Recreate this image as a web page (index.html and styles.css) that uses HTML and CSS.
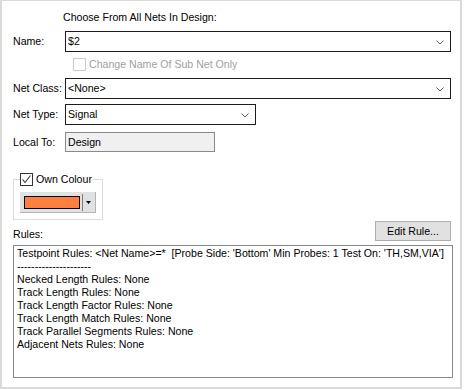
FILE: index.html
```html
<!DOCTYPE html>
<html>
<head>
<meta charset="utf-8">
<link rel="stylesheet" href="styles.css">
</head>
<body>
<div class="panel">
  <div class="caption">Choose From All Nets In Design:</div>

  <div class="row row-name">
    <span class="label">Name:</span>
    <div class="combo combo-wide">
      <span class="val">$2</span>
      <svg class="chev" width="8" height="5" viewBox="0 0 8 5"><polyline points="0.5,0.5 4,4 7.5,0.5" fill="none" stroke="#5a5a5a" stroke-width="1"/></svg>
    </div>
  </div>

  <div class="row row-sub">
    <span class="check check-disabled"></span>
    <span class="sub-label">Change Name Of Sub Net Only</span>
  </div>

  <div class="row row-class">
    <span class="label">Net Class:</span>
    <div class="combo combo-wide">
      <span class="val">&lt;None&gt;</span>
      <svg class="chev" width="8" height="5" viewBox="0 0 8 5"><polyline points="0.5,0.5 4,4 7.5,0.5" fill="none" stroke="#5a5a5a" stroke-width="1"/></svg>
    </div>
  </div>

  <div class="row row-type">
    <span class="label">Net Type:</span>
    <div class="combo combo-narrow">
      <span class="val">Signal</span>
      <svg class="chev" width="8" height="5" viewBox="0 0 8 5"><polyline points="0.5,0.5 4,4 7.5,0.5" fill="none" stroke="#5a5a5a" stroke-width="1"/></svg>
    </div>
  </div>

  <div class="row row-local">
    <span class="label">Local To:</span>
    <div class="readonly">Design</div>
  </div>

  <fieldset class="group">
    <legend class="legend">
      <span class="check check-on">
        <svg width="11" height="11" viewBox="0 0 11 11"><polyline points="1.5,5.5 4,8.5 9.5,1.5" fill="none" stroke="#333" stroke-width="1.1"/></svg>
      </span>
      <span class="legend-text">Own Colour</span>
    </legend>
    <div class="color-btn">
      <span class="swatch"></span>
      <span class="divider"></span>
      <svg class="arrow" width="5" height="3" viewBox="0 0 5 3"><polygon points="0,0 5,0 2.5,3" fill="#000"/></svg>
    </div>
  </fieldset>

  <div class="row row-rules">
    <span class="rules-label">Rules:</span>
    <div class="btn">Edit Rule...</div>
  </div>

  <div class="rules-box">
    <div>Testpoint Rules: &lt;Net Name&gt;=*&nbsp; [Probe Side: 'Bottom' Min Probes: 1 Test On: 'TH,SM,VIA']</div>
    <div>---------------------</div>
    <div>Necked Length Rules: None</div>
    <div>Track Length Rules: None</div>
    <div>Track Length Factor Rules: None</div>
    <div>Track Length Match Rules: None</div>
    <div>Track Parallel Segments Rules: None</div>
    <div>Adjacent Nets Rules: None</div>
  </div>
</div>
</body>
</html>
```

FILE: styles.css
```css
html, body {
  margin: 0;
  padding: 0;
  background: #ffffff;
}

body {
  font-family: "Liberation Sans", Arial, sans-serif;
  font-size: 10.6px;
  line-height: 13px;
  color: #000;
}

.panel {
  box-sizing: border-box;
  width: 462px;
  height: 389px;
  border-style: solid;
  border-color: #dadada;
  border-width: 1px 2px 2px 2px;
  padding: 10px 9px 0 11px;
  display: flex;
  flex-direction: column;
}

.caption {
  margin-left: 50px;
  height: 13px;
}

.row {
  display: flex;
  align-items: center;
}

.label {
  width: 52px;
  flex: none;
}

.row-name { margin-top: 7px; height: 21px; }
.row-sub { margin-top: 6px; height: 13px; padding-left: 60px; }
.row-class { margin-top: 7px; height: 21px; }
.row-type { margin-top: 5px; height: 21px; }
.row-local { margin-top: 7px; height: 20px; }

.combo {
  box-sizing: border-box;
  height: 21px;
  border: 1px solid #1c1c1c;
  background: #fff;
  display: flex;
  align-items: center;
  justify-content: space-between;
  padding: 0 6px 0 2px;
}

.combo-wide { width: 387px; }
.combo-narrow { width: 191px; }

.chev { display: block; margin-top: 1px; }

.check {
  box-sizing: border-box;
  width: 13px;
  height: 13px;
  border: 1px solid #333;
  background: #fff;
  display: inline-flex;
  align-items: center;
  justify-content: center;
  flex: none;
}

.check-disabled { border-color: #cccccc; }

.sub-label {
  color: #a0a0a0;
  margin-left: 3px;
}

.readonly {
  box-sizing: border-box;
  width: 150px;
  height: 20px;
  border: 1px solid #8a8a8a;
  background: #f0f0f0;
  padding: 0 2px;
  display: flex;
  align-items: center;
}

.group {
  margin: 21px 0 0 0;
  width: 90px;
  box-sizing: border-box;
  height: 47px;
  border: 1px solid #dcdcdc;
  padding: 0 0 0 6px;
  min-width: 0;
}

.legend {
  padding: 0 1px 0 0;
  display: flex;
  align-items: center;
  height: 13px;
}

.legend-text { margin-left: 3px; }

.color-btn {
  box-sizing: border-box;
  margin-top: 6px;
  width: 76px;
  height: 21px;
  background: #e1e1e1;
  border-bottom: 1px solid #b4b4b4;
  border-right: 1px solid #b4b4b4;
  display: flex;
  align-items: center;
  padding-left: 4px;
}

.swatch {
  box-sizing: border-box;
  width: 56px;
  height: 13px;
  border: 1px solid #000;
  background: #ff7f3f;
}

.divider {
  width: 1px;
  height: 17px;
  background: #7a7a7a;
  margin-left: 2px;
}

.arrow { margin-left: 3px; display: block; }

.row-rules {
  margin-top: 1px;
  height: 20px;
  align-items: flex-end;
  justify-content: space-between;
}

.rules-label { line-height: 13px; }

.btn {
  box-sizing: border-box;
  width: 76px;
  height: 20px;
  background: #e1e1e1;
  border: 1px solid #adadad;
  display: flex;
  align-items: center;
  justify-content: center;
}

.rules-box {
  box-sizing: border-box;
  margin-top: 4px;
  width: 440px;
  height: 133px;
  border: 1px solid #828790;
  background: #fff;
  padding: 1px 3px;
  white-space: nowrap;
  overflow: hidden;
}
```
